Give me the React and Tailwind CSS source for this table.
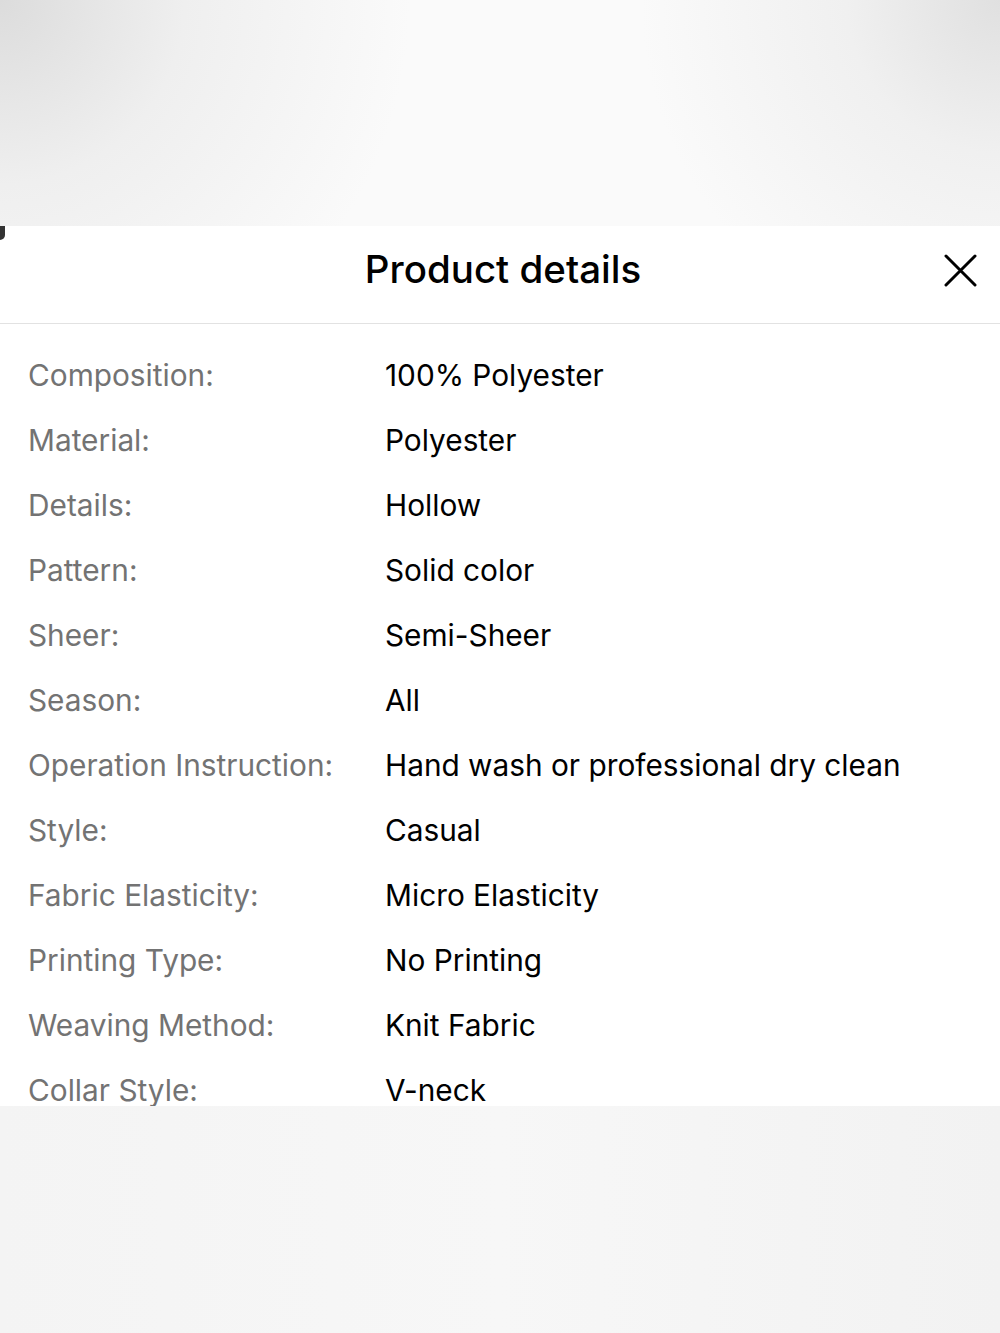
const rows = [
  ["Composition:", "100% Polyester"],
  ["Material:", "Polyester"],
  ["Details:", "Hollow"],
  ["Pattern:", "Solid color"],
  ["Sheer:", "Semi-Sheer"],
  ["Season:", "All"],
  ["Operation Instruction:", "Hand wash or professional dry clean"],
  ["Style:", "Casual"],
  ["Fabric Elasticity:", "Micro Elasticity"],
  ["Printing Type:", "No Printing"],
  ["Weaving Method:", "Knit Fabric"],
  ["Collar Style:", "V-neck"],
];

export default function App() {
  return (
    <div
      className="w-[1000px] h-[1333px] flex flex-col bg-[#f9f9f9] overflow-hidden"
      style={{ fontFamily: "Inter, 'Noto Sans', sans-serif" }}
    >
      <div className="h-[226px] bg-[#fafafa] bg-[radial-gradient(circle_at_0%_0%,#dcdcdc_0%,#efefef_18%,rgba(250,250,250,0)_40%),radial-gradient(circle_at_100%_0%,#e0e0e0_0%,#f0f0f0_15%,rgba(250,250,250,0)_35%)]" />
      <div className="relative h-[880px] bg-white overflow-hidden flex flex-col">
        <div className="absolute left-0 top-0 w-[5px] h-[14px] bg-[#333] rounded-br-[6px]" />
        <div className="relative h-[98px] flex items-center justify-center border-b border-[#e2e2e2] shrink-0">
          <h1 className="text-[38.5px] font-medium text-black ml-[6px] mt-[-10px]">Product details</h1>
          <svg className="absolute right-[22px] top-[26px]" width="36" height="36" viewBox="0 0 36 36" fill="none" stroke="#000" strokeWidth="3" strokeLinecap="round">
            <path d="M4 4 L33 33 M33 4 L4 33" />
          </svg>
        </div>
        <div className="pt-[19px] px-[28px] flex flex-col">
          {rows.map(([k, v]) => (
            <div key={k} className="h-[65px] flex items-center text-[29.8px] shrink-0">
              <div className="w-[357px] text-[#737373]">{k}</div>
              <div className="text-black">{v}</div>
            </div>
          ))}
        </div>
      </div>
      <div className="flex-1 bg-[linear-gradient(90deg,#f4f4f4,#f7f7f7_50%,#f2f2f2)]" />
    </div>
  );
}
